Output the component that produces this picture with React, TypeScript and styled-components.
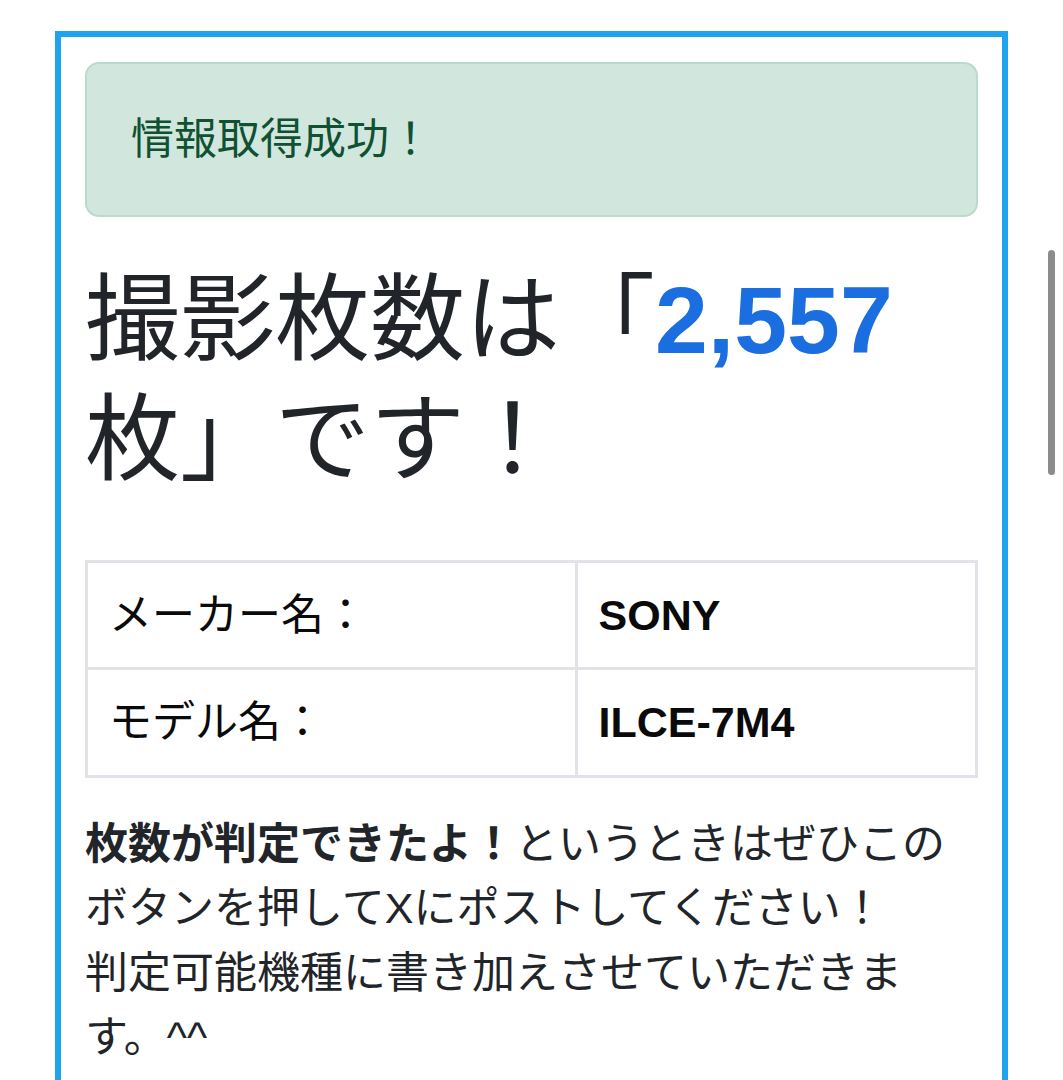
import React from 'react';
import styled, { createGlobalStyle } from 'styled-components';

const GlobalStyle = createGlobalStyle`
  html, body {
    margin: 0;
    padding: 0;
    background: #ffffff;
  }
  body {
    font-family: "Liberation Sans", "Noto Sans CJK JP", sans-serif;
    font-size: 43px;
    line-height: 1.5;
    color: #212529;
  }
`;

const Page = styled.div`
  padding: 31px 55px 40px;
`;

const Card = styled.div`
  border: 6px solid #1fa3ef;
  padding: 25px 24px 24px;
  background: #ffffff;
`;

const Alert = styled.div`
  background: #d1e7dd;
  border: 2px solid #badbcc;
  border-radius: 14px;
  color: #0f5132;
  padding: 43px 44px;
  margin-bottom: 43px;
`;

const Heading = styled.h1`
  font-size: 95px;
  line-height: 120px;
  font-weight: 400;
  color: #212529;
  margin: 2px 0 60px;
`;

const Count = styled.span`
  color: #1b6ee0;
  font-weight: 700;
`;

const InfoTable = styled.table`
  width: 100%;
  border-collapse: collapse;
  border: 3px solid #e1e3e8;
  margin-bottom: 34px;
`;

const Cell = styled.td<{ $bold?: boolean; $wide?: boolean }>`
  border: 3px solid #e1e3e8;
  padding: 20px 21px;
  color: #0a0a0a;
  font-weight: ${p => (p.$bold ? 700 : 400)};
  width: ${p => (p.$wide ? '55%' : 'auto')};
  vertical-align: middle;
`;

const Note = styled.p`
  margin: 0;
  color: #212529;
`;

const ScrollIndicator = styled.div`
  position: fixed;
  top: 250px;
  right: 8px;
  width: 7px;
  height: 225px;
  border-radius: 4px;
  background: rgba(0, 0, 0, 0.45);
`;

const rows = [
  { label: 'メーカー名：', value: 'SONY' },
  { label: 'モデル名：', value: 'ILCE-7M4' },
];

export default function App() {
  return (
    <>
      <GlobalStyle />
      <Page lang="ja">
        <Card>
          <Alert>情報取得成功！</Alert>
          <Heading>
            撮影枚数は「<Count>2,557</Count>枚」です！
          </Heading>
          <InfoTable>
            <tbody>
              {rows.map(r => (
                <tr key={r.label}>
                  <Cell $wide>{r.label}</Cell>
                  <Cell $bold>{r.value}</Cell>
                </tr>
              ))}
            </tbody>
          </InfoTable>
          <Note>
            <b>枚数が判定できたよ！</b>というときはぜひこのボタンを押してXにポストしてください！
            <br />
            判定可能機種に書き加えさせていただきます。^^
          </Note>
        </Card>
      </Page>
      <ScrollIndicator />
    </>
  );
}
